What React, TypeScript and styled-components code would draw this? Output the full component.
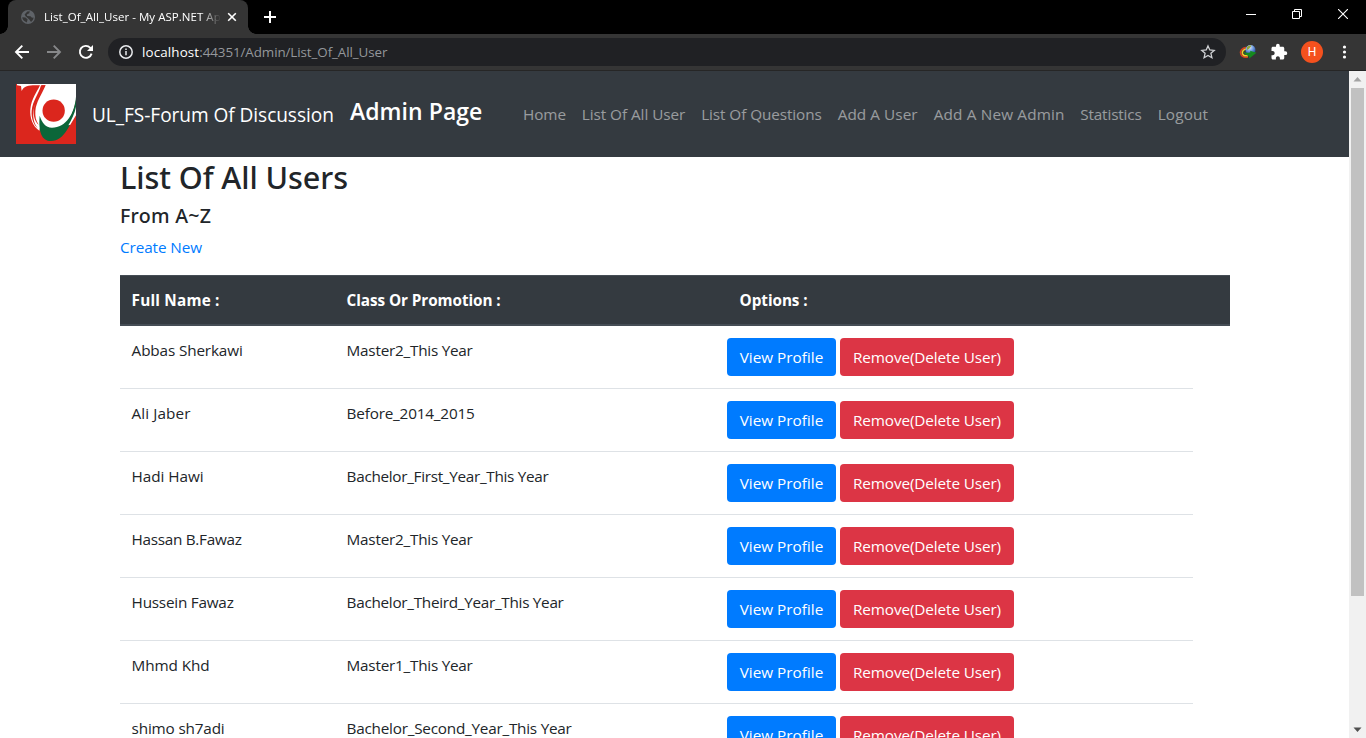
import React from "react";
import styled, { createGlobalStyle } from "styled-components";

const GlobalStyle = createGlobalStyle`
  *, *::before, *::after { box-sizing: border-box; }
  html, body { margin: 0; padding: 0; overflow: hidden; background: #fff; }
  body { font-family: "Open Sans", "Noto Sans", sans-serif; color: #212529; }
`;

const Window = styled.div`
  display: flex;
  flex-direction: column;
  height: 738px;
  overflow: hidden;
`;

/* Browser chrome */

const TabStrip = styled.div`
  flex: none;
  display: flex;
  height: 34px;
  padding-left: 8px;
  background: #000;
`;

const Tab = styled.div`
  position: relative;
  display: flex;
  align-items: center;
  width: 240px;
  padding: 0 10px 0 12px;
  background: #353535;
  border-radius: 8px 8px 0 0;

  &::before, &::after {
    content: "";
    position: absolute;
    bottom: 0;
    width: 8px;
    height: 8px;
  }
  &::before {
    left: -8px;
    background: radial-gradient(circle at 0 0, transparent 7.5px, #353535 8px);
  }
  &::after {
    right: -8px;
    background: radial-gradient(circle at 100% 0, transparent 7.5px, #353535 8px);
  }
`;

const TabTitle = styled.span`
  flex: 1;
  margin: 0 6px 0 8px;
  overflow: hidden;
  white-space: nowrap;
  font-size: 11.5px;
  line-height: 18px;
  letter-spacing: 0.04px;
  color: #fff;
  mask-image: linear-gradient(to right, #000 156px, transparent 177px);
`;

const NewTab = styled.div`
  display: flex;
  align-items: center;
  margin-left: 15px;
`;

const WindowControls = styled.div`
  display: flex;
  margin-left: auto;
`;

const WindowButton = styled.div`
  display: flex;
  justify-content: center;
  width: 46px;
  padding-top: 9px;
`;

const Toolbar = styled.div`
  flex: none;
  display: flex;
  align-items: center;
  height: 37px;
  padding: 0 14px;
  background: #353535;
  border-bottom: 1px solid #262626;
`;

const NavButtons = styled.div`
  display: flex;
  gap: 16px;
  margin-right: 14px;
`;

const AddressBar = styled.div`
  display: flex;
  align-items: center;
  width: 1118px;
  height: 28px;
  padding: 0 10px;
  border-radius: 14px;
  background: #202124;
`;

const Url = styled.span`
  flex: 1;
  margin-left: 8px;
  font-size: 13.4px;
  letter-spacing: -0.09px;
  color: #94979b;
`;

const UrlHost = styled.span`
  letter-spacing: 0.13px;
  color: #fff;
`;

const Extensions = styled.div`
  display: flex;
  align-items: center;
  gap: 13px;
  margin-left: 13px;
`;

const Avatar = styled.div`
  width: 22px;
  height: 22px;
  border-radius: 50%;
  background: #f4511e;
  color: #fff;
  font: 12px/22px Roboto, sans-serif;
  text-align: center;
`;

/* Page */

const Viewport = styled.div`
  flex: 1;
  display: flex;
  min-height: 0;
`;

const Page = styled.div`
  flex: 1;
  min-width: 0;
  overflow: hidden;
`;

const Scrollbar = styled.div`
  display: flex;
  flex-direction: column;
  align-items: center;
  width: 17px;
  background: #f1f1f1;
`;

const ScrollArrow = styled.svg`
  display: block;
  width: 17px;
  height: 17px;
`;

const ScrollThumb = styled.div`
  width: 13px;
  height: 508px;
  margin-bottom: auto;
  background: #c1c1c1;
`;

const Label = styled.span<{ $ls?: number }>`
  letter-spacing: ${(p) => p.$ls ?? 0}px;
  white-space: nowrap;
`;

const Navbar = styled.nav`
  display: flex;
  align-items: center;
  height: 86px;
  padding: 0 16px;
  background: #343a40;
`;

const Brand = styled.a`
  width: 258px;
  margin-left: 16px;
  padding-top: 2px;
  font-size: 19.1px;
  line-height: 30px;
  color: #fff;
`;

const AdminTitle = styled.h4`
  width: 173px;
  margin: 0 0 5px;
  font-size: 23px;
  font-weight: 600;
  line-height: 29px;
  color: #fff;
`;

const NavLinks = styled.div`
  display: flex;
`;

const NavLink = styled.a<{ $width: number }>`
  width: ${(p) => p.$width}px;
  font-size: 15.3px;
  line-height: 24px;
  color: rgba(255, 255, 255, 0.5);
`;

const Content = styled.main`
  width: 1110px;
  margin-left: 120px;
`;

const Title = styled.h2`
  margin: 0 0 8px;
  padding-top: 1px;
  font: 500 30.6px/38.4px "Noto Sans", sans-serif;
`;

const Subtitle = styled.h5`
  margin: 0 0 7px;
  font: 500 19.6px/24px "Noto Sans", sans-serif;
`;

const CreateLink = styled.a`
  display: block;
  margin-bottom: 15.6px;
  font-size: 15.3px;
  line-height: 24px;
  color: #007bff;
`;

const HeaderRow = styled.div`
  display: grid;
  grid-template-columns: 215px 393px 1fr;
  height: 51px;
  padding: 12px 12px 0 11.6px;
  border-top: 1px solid #454d55;
  border-bottom: 2px solid #454d55;
  background: #343a40;
  color: #fff;
  font-size: 15.3px;
  font-weight: 700;
  line-height: 24px;
`;

const Row = styled.div`
  display: grid;
  grid-template-columns: 215px 380.4px 1fr;
  width: 1073px;
  height: 63px;
  padding: 12px 12px 0 11.6px;
  border-bottom: 1px solid #dee2e6;
  font-size: 15.3px;
  line-height: 24px;
`;

const Actions = styled.div`
  display: flex;
  gap: 4px;
`;

const Button = styled.a<{ $variant: "primary" | "danger" }>`
  display: flex;
  align-items: center;
  justify-content: center;
  width: ${(p) => (p.$variant === "primary" ? 109 : 174)}px;
  height: 38px;
  border-radius: 4px;
  background: ${(p) => (p.$variant === "primary" ? "#007bff" : "#dc3545")};
  color: #fff;
`;

const Globe = () => (
  <svg width="16" height="16" viewBox="0 0 16 16">
    <circle cx="8" cy="8" r="7" fill="#5f6368" />
    <path d="M2.3 8.2 5.5 8.6 7.6 10.4 6.8 13.4 5.2 12.6C3.4 11.7 2.4 10.2 2.3 8.2ZM7.3 2.4 9.8 2.3 9.2 4.3 6.8 5.4 7.2 7.1 10.5 7.2 12 8.8 13.6 8.6C13.5 10.3 12.5 12 11 12.9L9.3 10.6 5.6 7.2 4.6 5.6Z" fill="#353535" />
  </svg>
);

const Logo = () => (
  <svg width="60" height="60" viewBox="0 0 180 180">
    <rect width="180" height="180" fill="#db261d" />
    <path d="M3 0H180V48C172 92 150 140 108 137C86 134 74 112 70 140C50 128 41 100 43 76C46 44 62 26 72 4C50 3 24 2 17 21L15 6L3 4Z" fill="#fff" />
    <path d="M75 4H88C72 34 56 54 52 84C50 104 56 124 67 134C54 124 45 104 47 80C50 50 68 30 75 4Z" fill="#db261d" />
    <path d="M78 4H89C76 34 60 54 58 82C57 98 60 112 68 122C58 114 52 98 53 80C56 50 70 30 78 4Z" fill="#db261d" />
    <path d="M180 38C176 88 150 131 108 131C88 130 78 116 71 95C67 142 76 171 105 171C146 171 166 118 180 76Z" fill="#0b6639" />
    <path d="M180 68C176 90 166 108 157 124L163 122 180 94Z" fill="#fff" />
    <circle cx="113" cy="80" r="33.5" fill="#db261d" />
  </svg>
);

const DownloadManager = () => (
  <svg width="18" height="18" viewBox="0 0 18 18">
    <defs>
      <radialGradient id="ball" cx="0.4" cy="0.25" r="0.75">
        <stop offset="0" stopColor="#e8efff" />
        <stop offset="0.5" stopColor="#6f9be0" />
        <stop offset="1" stopColor="#1c4496" />
      </radialGradient>
    </defs>
    <path d="M7 4.500C3 5 .8 8 1.800 11 2.800 13.600 6 14.600 9 14" fill="none" stroke="#d8401f" strokeWidth="1.5" />
    <path d="M7 6C4.500 6.500 2.800 8.500 3.500 10.700 4.300 12.700 6.500 13 9 12.600" fill="none" stroke="#f3cf2d" strokeWidth="1.6" />
    <circle cx="11.5" cy="7" r="5" fill="url(#ball)" />
    <path d="M8 4C9.500 2.500 11 2.200 12.500 2.800L10.400 5.400 8 7Z" fill="#8fa73a" />
    <path d="M4.500 8.200C6.500 10 9 10 11.500 9.200L11 7.800 17.500 9.800 10.300 15.600 10 13C7.500 12.800 5.500 11 4.500 8.200Z" fill="#158a1e" />
  </svg>
);

const links: [string, number, number][] = [
  ["Home", 58.7, -0.06],
  ["List Of All User", 119.5, -0.04],
  ["List Of Questions", 136.5, -0.08],
  ["Add A User", 96, 0.07],
  ["Add A New Admin", 146.5, 0.17],
  ["Statistics", 77.5, -0.14],
  ["Logout", 60, 0.16],
];

const users: [string, number, string, number][] = [
  ["Abbas Sherkawi", -0.14, "Master2_This Year", -0.24],
  ["Ali Jaber", 0.09, "Before_2014_2015", -0.19],
  ["Hadi Hawi", -0.05, "Bachelor_First_Year_This Year", -0.3],
  ["Hassan B.Fawaz", -0.29, "Master2_This Year", -0.24],
  ["Hussein Fawaz", -0.23, "Bachelor_Theird_Year_This Year", -0.29],
  ["Mhmd Khd", -0.09, "Master1_This Year", -0.24],
  ["shimo sh7adi", -0.17, "Bachelor_Second_Year_This Year", -0.235],
];

export default function App() {
  return (
    <Window>
      <GlobalStyle />
      <TabStrip>
        <Tab>
          <Globe />
          <TabTitle>List_Of_All_User - My ASP.NET Ap</TabTitle>
          <svg width="12" height="12" viewBox="0 0 12 12" stroke="#fff" strokeWidth="1.6">
            <path d="M2.2 2.2 9.8 9.8M9.8 2.2 2.2 9.8" />
          </svg>
        </Tab>
        <NewTab>
          <svg width="14" height="14" viewBox="0 0 14 14" stroke="#fff" strokeWidth="2">
            <path d="M7 1V13M1 7H13" />
          </svg>
        </NewTab>
        <WindowControls>
          <WindowButton>
            <svg width="10" height="11" viewBox="0 0 10 11" stroke="#fff">
              <path d="M0 5.5H10" />
            </svg>
          </WindowButton>
          <WindowButton>
            <svg width="10" height="10" viewBox="0 0 10 10" fill="none" stroke="#fff">
              <path d="M.5 2.5H7.5V9.5H.5ZM2.5 2.5V.5H9.5V7.5H7.5" />
            </svg>
          </WindowButton>
          <WindowButton>
            <svg width="10" height="10" viewBox="0 0 10 10" stroke="#fff" strokeWidth="1.1">
              <path d="M0 0 10 10M10 0 0 10" />
            </svg>
          </WindowButton>
        </WindowControls>
      </TabStrip>
      <Toolbar>
        <NavButtons>
          <svg width="16" height="16" viewBox="0 0 16 16" fill="none" stroke="#fff" strokeWidth="1.9">
            <path d="M15 8H2.5M8.3 1.7 2 8 8.3 14.3" />
          </svg>
          <svg width="16" height="16" viewBox="0 0 16 16" fill="none" stroke="#87888a" strokeWidth="1.9">
            <path d="M1 8H13.5M7.7 1.7 14 8 7.7 14.3" />
          </svg>
          <svg width="16" height="16" viewBox="0 0 16 16">
            <path d="M13.6 9.6A6 6 0 1 1 12.3 3.8L13.3 4.9" fill="none" stroke="#fff" strokeWidth="1.9" />
            <path d="M15 1V7H9Z" fill="#fff" />
          </svg>
        </NavButtons>
        <AddressBar>
          <svg width="16" height="16" viewBox="0 0 16 16" fill="none" stroke="#e8eaed" strokeWidth="1.5">
            <circle cx="8" cy="8" r="6.2" />
            <path d="M8 7V11.3M8 4.5V6" />
          </svg>
          <Url>
            <UrlHost>localhost</UrlHost>:44351/Admin/List_Of_All_User
          </Url>
          <svg width="16" height="16" viewBox="0 0 16 16" fill="none" stroke="#d0d2d5" strokeWidth="1.3">
            <path d="M8 1.9 9.8 6 14.2 6.4 10.9 9.3 11.9 13.7 8 11.4 4.1 13.7 5.1 9.3 1.8 6.4 6.2 6Z" />
          </svg>
        </AddressBar>
        <Extensions>
          <DownloadManager />
          <svg width="18" height="18" viewBox="0 0 24 24" fill="#fff">
            <path d="M20.500 11H19V7c0-1.100-.9-2-2-2h-4V3.500a2.500 2.500 0 0 0-5 0V5H4c-1.100 0-1.990.9-1.990 2v3.800H3.500c1.490 0 2.700 1.210 2.700 2.700s-1.210 2.700-2.700 2.700H2V20c0 1.100.9 2 2 2h3.800v-1.500c0-1.490 1.210-2.700 2.700-2.700s2.700 1.210 2.700 2.700V22H17c1.100 0 2-.9 2-2v-4h1.500a2.500 2.500 0 0 0 0-5Z" />
          </svg>
          <Avatar>H</Avatar>
          <svg width="16" height="16" viewBox="0 0 16 16" fill="#fff">
            <circle cx="8.5" cy="3" r="1.6" />
            <circle cx="8.5" cy="8" r="1.6" />
            <circle cx="8.5" cy="13" r="1.6" />
          </svg>
        </Extensions>
      </Toolbar>
      <Viewport>
        <Page>
          <Navbar>
            <Logo />
            <Brand>
              <Label $ls={-0.06}>UL_FS-Forum Of Discussion</Label>
            </Brand>
            <AdminTitle>
              <Label $ls={0.04}>Admin Page</Label>
            </AdminTitle>
            <NavLinks>
              {links.map(([text, width, ls]) => (
                <NavLink key={text} $width={width}>
                  <Label $ls={ls}>{text}</Label>
                </NavLink>
              ))}
            </NavLinks>
          </Navbar>
          <Content>
            <Title>
              <Label $ls={-0.08}>List Of All Users</Label>
            </Title>
            <Subtitle>
              <Label $ls={0.27}>From A~Z</Label>
            </Subtitle>
            <CreateLink>
              <Label $ls={-0.09}>Create New</Label>
            </CreateLink>
            <HeaderRow>
              <Label $ls={0.2}>Full Name :</Label>
              <Label $ls={-0.08}>Class Or Promotion :</Label>
              <Label $ls={-0.07}>Options :</Label>
            </HeaderRow>
            {users.map(([name, nameLs, group, groupLs]) => (
              <Row key={name}>
                <Label $ls={nameLs}>{name}</Label>
                <Label $ls={groupLs}>{group}</Label>
                <Actions>
                  <Button $variant="primary">
                    <Label>View Profile</Label>
                  </Button>
                  <Button $variant="danger">
                    <Label $ls={-0.11}>Remove(Delete User)</Label>
                  </Button>
                </Actions>
              </Row>
            ))}
          </Content>
        </Page>
        <Scrollbar>
          <ScrollArrow viewBox="0 0 17 17" fill="#a3a3a3">
            <path d="M8.500 6 12.500 10.500H4.500Z" />
          </ScrollArrow>
          <ScrollThumb />
          <ScrollArrow viewBox="0 0 17 17" fill="#505050">
            <path d="M4.500 6.500H12.500L8.500 11Z" />
          </ScrollArrow>
        </Scrollbar>
      </Viewport>
    </Window>
  );
}
